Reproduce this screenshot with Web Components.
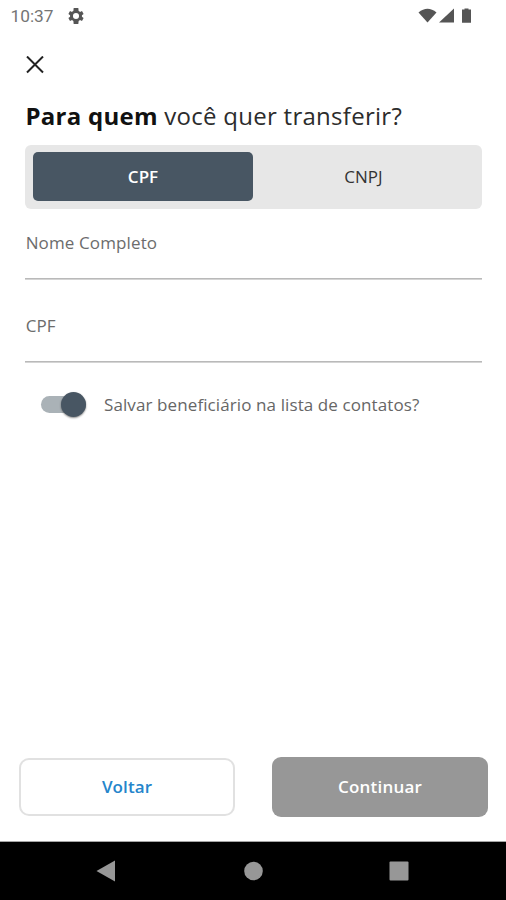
<!DOCTYPE html>
<html lang="pt-BR">
<head>
<meta charset="utf-8">
<title>Transferir</title>
<style>
html,body{margin:0;height:100%;background:#fff}
body{font-family:"Open Sans","Noto Sans",sans-serif}
</style>
</head>
<body>
<transfer-screen></transfer-screen>
<script>
const define = (name, html) => customElements.define(name, class extends HTMLElement {
  constructor() {
    super();
    this.attachShadow({ mode: 'open' }).innerHTML = html;
  }
});

define('status-bar', `
<style>
:host{display:flex;align-items:center;height:32px;box-sizing:border-box;padding:0 33px 0 10.500px;font:400 17.300px/32px Roboto,sans-serif;color:#757575}
.gear{margin-left:14px}
.right{margin-left:auto;display:flex}
svg{display:block}
</style>
<span>10:37</span>
<svg class="gear" width="16" height="16" viewBox="2 2 20 20" fill="#555"><path fill-rule="evenodd" d="M19.4 13a7.5 7.5 0 0 0 0-2l2.1-1.6-2-3.5-2.5 1a7.7 7.7 0 0 0-1.7-1L14.9 2h-5.8l-.4 3.9a7.7 7.7 0 0 0-1.7 1l-2.5-1-2 3.5L4.600 11a7.500 7.500 0 0 0 0 2l-2.100 1.600 2 3.500 2.500-1a7.700 7.700 0 0 0 1.700 1l.4 3.900h5.800l.4-3.900a7.700 7.700 0 0 0 1.700-1l2.500 1 2-3.500zM12 8.200a3.800 3.800 0 1 1 0 7.600a3.800 3.800 0 0 1 0-7.600z"/></svg>
<svg class="right" width="55" height="16" viewBox="0 0 55 16" fill="#555"><path d="M0.500 4.500Q9.500-3 18.500 4.500L9.500 14.500Z"/><path d="M21 14.500H36V0.500Z"/><path d="M44 1.500h2.500V.5h4v1h2.500V14.700H44z"/></svg>`);

define('close-button', `
<style>:host{display:block;padding:0 26px}svg{display:block}</style>
<svg width="18" height="18" viewBox="0 0 18 18" fill="none" stroke="#222" stroke-width="2"><path d="M1 .5L17 16.500M17 .5L1 16.500"/></svg>`);

define('screen-title', `
<style>:host{display:block;font-size:24px;line-height:34px;font-weight:400;color:#2c2c2c;white-space:nowrap;letter-spacing:.27px}
::slotted(b){font-weight:700;color:#111;letter-spacing:.27px}</style>
<slot></slot>`);

define('segment-control', `
<style>:host{display:grid;grid-template-columns:220px 1fr;box-sizing:border-box;height:64px;padding:7px 8px 8px;background:#e7e7e7;border-radius:6px}</style>
<slot></slot>`);

define('segment-item', `
<style>:host{display:flex;align-items:center;justify-content:center;border-radius:5px;font-size:17px;font-weight:400;color:#333}
:host([selected]){background:#485663;color:#fff;font-weight:600}</style>
<slot></slot>`);

define('text-field', `
<style>:host{display:block;box-sizing:border-box;height:83px;padding-top:22px;font-size:17px;line-height:24px;color:#6c6c6c;letter-spacing:.12px}
.text{padding-left:.7px}
.line{height:1px;margin-top:23px;background:#b9b9b9;border-bottom:1px solid #d4d4d4}</style>
<div class="text"><slot></slot></div><div class="line"></div>`);

define('toggle-row', `
<style>:host{display:flex;align-items:center;gap:18px;padding-left:16px;height:28px;font-size:17px;color:#666;white-space:nowrap;letter-spacing:.1px}
.track{width:45px;height:17px;border-radius:9px;background:#aab2b7;display:flex;align-items:center;justify-content:flex-end}
.thumb{width:25px;height:25px;flex:none;border-radius:50%;background:#485663;box-shadow:0 1px 2px #0007}</style>
<span class="track"><span class="thumb"></span></span><span class="label"><slot></slot></span>`);

define('action-button', `
<style>:host{display:flex;align-items:center;justify-content:center;box-sizing:border-box;width:216px;height:58px;border:2px solid #e1e1e1;border-radius:10px;font-size:17px;font-weight:600;color:#2585cb;background:#fff;letter-spacing:.1px}
:host([primary]){height:60px;border:0;border-radius:9px;background:#979797;color:#fff;letter-spacing:.2px}</style>
<slot></slot>`);

define('nav-bar', `
<style>:host{display:block;height:59px;background:#000;border-top:1px solid #a5a5a5;box-sizing:border-box}svg{display:block}</style>
<svg width="506" height="58" viewBox="0 842 506 58" fill="#979797"><path d="M96.500 871L115 860.500V881.500Z"/><circle cx="253.500" cy="871" r="9.300"/><rect x="389.500" y="861.500" width="19" height="19" rx="1"/></svg>`);

define('transfer-screen', `
<style>
:host{display:flex;flex-direction:column;height:900px;width:506px;overflow:hidden}
close-button{margin-top:24px}
main{padding:25px 24px 0 25px}
screen-title{padding-left:.5px}
segment-control{margin-top:12px}
toggle-row{margin-top:15px}
footer{margin-top:auto;display:flex;align-items:center;justify-content:space-between;padding:0 18px 24.500px 19px}
</style>
<status-bar></status-bar>
<close-button></close-button>
<main>
<screen-title><b>Para quem</b> você quer transferir?</screen-title>
<segment-control><segment-item selected>CPF</segment-item><segment-item>CNPJ</segment-item></segment-control>
<text-field>Nome Completo</text-field>
<text-field>CPF</text-field>
<toggle-row>Salvar beneficiário na lista de contatos?</toggle-row>
</main>
<footer><action-button>Voltar</action-button><action-button primary>Continuar</action-button></footer>
<nav-bar></nav-bar>`);
</script>
</body>
</html>
